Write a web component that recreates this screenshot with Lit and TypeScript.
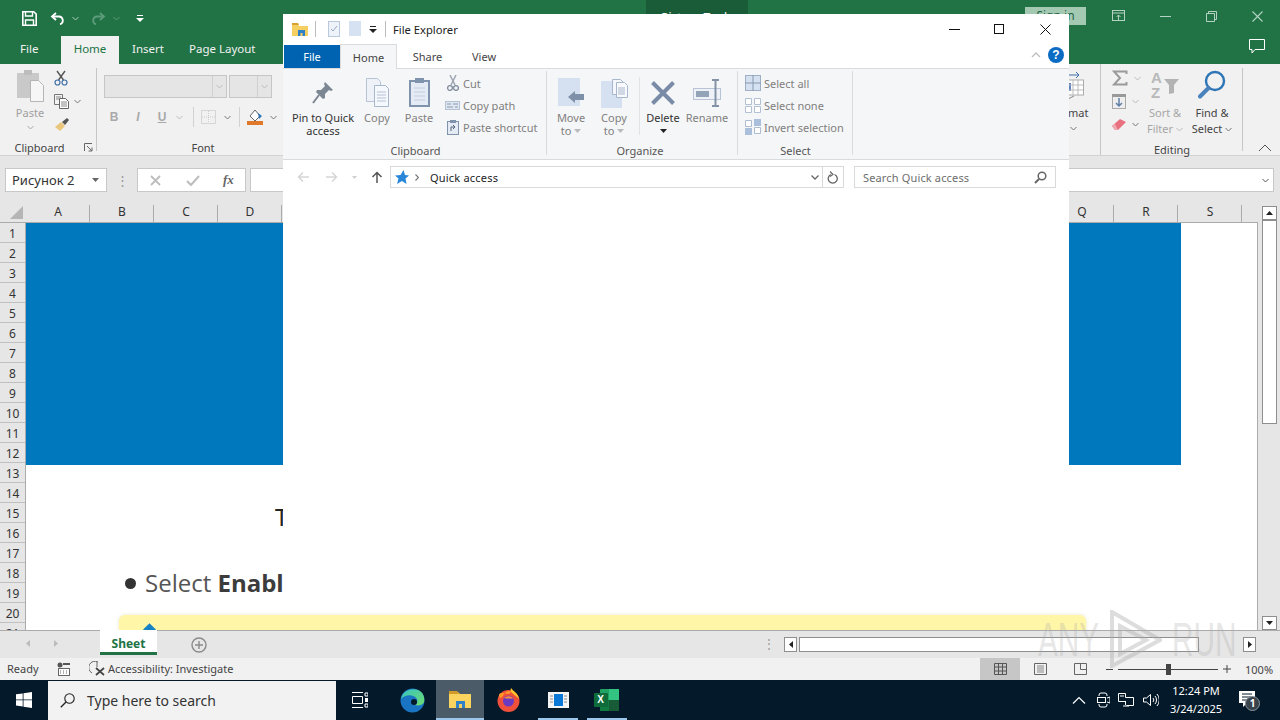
import { LitElement, html, css, svg } from "lit";
import { customElement } from "lit/decorators.js";

const chev = (c = "#777") => html`<svg class="chev" width="7" height="5" viewBox="0 0 7 5"><path d="M.5 1 3.500 4 6.500 1" fill="none" stroke="${c}" stroke-width="1"/></svg>`;
const tri = (c = "#444") => html`<svg width="7" height="4" viewBox="0 0 7 4"><path d="M0 0h7L3.500 4z" fill="${c}"/></svg>`;
const i = (w: number, h: number, body: unknown) => html`<svg width="${w}" height="${h}" viewBox="0 0 ${w} ${h}">${body}</svg>`;

const icons = {
  save: i(15, 15, svg`<path d="M.8.8h11l2.400 2.400v11H.8z" fill="none" stroke="#fff" stroke-width="1.600"/><path d="M3.500 1v4h7V1" fill="none" stroke="#fff" stroke-width="1.400"/><path d="M3.500 14V9h8v5" fill="none" stroke="#fff" stroke-width="1.400"/>`),
  undo: i(15, 13, svg`<path d="M6 1 2 4.500 6 8" fill="none" stroke="#fff" stroke-width="1.800"/><path d="M2.500 4.500H9a4 4 0 0 1 1 7.800" fill="none" stroke="#fff" stroke-width="1.800"/>`),
  redo: i(15, 13, svg`<path d="M9 1 13 4.500 9 8" fill="none" stroke="#5c9c7a" stroke-width="1.800"/><path d="M12.500 4.500H6a4 4 0 0 0-1 7.800" fill="none" stroke="#5c9c7a" stroke-width="1.800"/>`),
  qat: i(8, 8, svg`<path d="M1 1h6v1H1z" fill="#fff"/><path d="M0 4h8L4 8z" fill="#fff"/>`),
  paste: i(29, 34, svg`<rect x="1" y="4" width="22" height="25" fill="#c9c9c9"/><rect x="8" y="1" width="8" height="5" fill="#bdbdbd"/><path d="M14.500 11.500h8l5 5v16h-13z" fill="#f6f6f6" stroke="#b5b5b5"/>`),
  cut: i(14, 16, svg`<path d="M3 1 9.500 10M11 1 4.500 10" stroke="#555" stroke-width="1.400" fill="none"/><circle cx="3.500" cy="12.500" r="2.500" fill="none" stroke="#3f6fa8" stroke-width="1.200"/><circle cx="10.500" cy="12.500" r="2.500" fill="none" stroke="#3f6fa8" stroke-width="1.200"/>`),
  copyX: i(16, 15, svg`<path d="M.5.500h8v10h-8z" fill="#f4f4f4" stroke="#777"/><path d="M5.500 4.500h6l3 3v7h-9z" fill="#fff" stroke="#666"/><path d="M2 3h5M2 5h3M7 8h6M7 10h6M7 12h6" stroke="#888"/>`),
  painter: i(16, 14, svg`<path d="M1 10 7 5l4 4-5 5z" fill="#eac77d"/><path d="M8 5l5-4 2 2-4 5z" fill="#555"/>`),
  fill: i(17, 17, svg`<path d="M8 1 3 7l5 5 5-5z" fill="#fff" stroke="#666"/><path d="M11 4l4 3-3 3z" fill="#2e75b6"/><rect x="0" y="12" width="16" height="4" fill="#e07a2a"/>`),
  borders: i(15, 14, svg`<rect x=".5" y=".5" width="14" height="13" fill="none" stroke="#bbb" stroke-dasharray="1 1"/><path d="M7.500 1v12M1 7h13" stroke="#ccc" stroke-dasharray="1 1"/>`),
  x: i(11, 11, svg`<path d="M1 1 10 10M10 1 1 10" stroke="#bdbdbd" stroke-width="1.800"/>`),
  check: i(14, 11, svg`<path d="M1 6 5 10 13 1" fill="none" stroke="#bdbdbd" stroke-width="2"/>`),
  format: i(16, 28, svg`<path d="M0 4h10M8 1l3 3-3 3" stroke="#3f6fa8" fill="none"/><rect x=".5" y="9" width="15" height="15" fill="#fff" stroke="#aaa"/><rect x="0" y="12" width="3" height="8" fill="#5a80c0"/><path d="M5 9v15M10 9v15M1 14h14M1 19h14" stroke="#bbb"/><path d="M0 28 6 25" stroke="#888"/>`),
  sum: i(16, 16, svg`<path d="M14.500 4V1.500H2L8 8 2 14.500h12.500V12" fill="none" stroke="#9a9a9a" stroke-width="2"/>`),
  down: i(14, 15, svg`<rect x=".5" y=".5" width="13" height="14" fill="#eee" stroke="#aaa"/><rect x="0" y="0" width="14" height="3" fill="#999"/><path d="M7 4v8M4 9l3 3 3-3" fill="none" stroke="#5f7fa8" stroke-width="1.500"/>`),
  eraser: i(14, 12, svg`<path d="M0 8 8 1l6 3-8 8H3z" fill="#e8707f"/><path d="M0 8l3 4h3L3 6z" fill="#f0a8b0"/>`),
  sort: i(30, 28, svg`<text x="1" y="13" font-family="Liberation Sans" font-size="15" font-weight="bold" fill="#b8b8b8">A</text><text x="1" y="28" font-family="Liberation Sans" font-size="15" font-weight="bold" fill="#b8b8b8">Z</text><path d="M14 9h15l-5 6v8l-5 1v-9z" fill="#b3b3b3"/>`),
  find: i(28, 29, svg`<circle cx="17" cy="11" r="9" fill="none" stroke="#2e75b6" stroke-width="2.400"/><path d="M10.500 18 2 26.500" stroke="#4a82bd" stroke-width="4" stroke-linecap="round"/>`),
  folder: i(17, 15, svg`<path d="M0 2h6l1 2h9v10H0z" fill="#f6cf62"/><path d="M0 1h6l1 2H0z" fill="#d8a02e"/><rect x="6" y="8" width="7" height="6" fill="#2f82c8"/><rect x="8.500" y="11" width="2" height="3" fill="#f6cf62"/>`),
  docCheck: i(12, 16, svg`<rect x=".5" y=".5" width="11" height="15" fill="#eef3fa" stroke="#b9c8dc"/><path d="M3 8l2 2 4-5" fill="none" stroke="#97aac4"/>`),
  docBlank: i(13, 16, svg`<rect x="0" y="0" width="12" height="15" fill="#d6e2f2"/>`),
  pin: i(22, 24, svg`<path d="M13 1 21 9l-2 1-2-1-4 4 0 4-2 1-7-7 1-2h4l4-4-1-2z" fill="#7d8794"/><path d="M7 14 1 22" stroke="#7d8794" stroke-width="2"/>`),
  copyL: i(25, 29, svg`<path d="M1.500.500h11l3 3v20h-14z" fill="#eef2f8" stroke="#b8c4d6"/><path d="M9.500 7.500h11l3 3v18h-14z" fill="#f5f8fc" stroke="#a9b7cc"/><path d="M12 14h9M12 17h9M12 20h9M12 23h9" stroke="#b6c2d4"/>`),
  pasteL: i(21, 29, svg`<rect x="1" y="3" width="19" height="25" fill="#e4ebf5" stroke="#7f93ad" stroke-width="2"/><rect x="6" y="0" width="9" height="5" fill="#7f93ad"/><path d="M5 10h11M5 14h11M5 18h11M5 22h11" stroke="#c3cedd"/>`),
  cutS: i(12, 16, svg`<path d="M3 0 8 10M9 0 4 10" stroke="#9aa3af" stroke-width="1.400"/><circle cx="3" cy="13" r="2.400" fill="none" stroke="#7f8c9d" stroke-width="1.300"/><circle cx="9" cy="13" r="2.400" fill="none" stroke="#7f8c9d" stroke-width="1.300"/>`),
  path: i(15, 9, svg`<rect x=".5" y=".5" width="14" height="8" fill="#dfe7f2" stroke="#b5c2d4"/><path d="M2 3h4M8 3h5M2 6h6M10 6h3" stroke="#8a9ab0"/>`),
  shortcut: i(12, 15, svg`<rect x=".5" y="1.500" width="11" height="13" fill="#e4ebf5" stroke="#7f93ad"/><rect x="3" y="0" width="6" height="3" fill="#7f93ad"/><path d="M4 11V7h4M6 5l2 2-2 2" fill="none" stroke="#55657a"/>`),
  move: i(27, 29, svg`<rect x="0" y="0" width="22" height="28" fill="#d5e0f0"/><path d="M10 19l7-6v3h9v6h-9v3z" fill="#7f91a8"/>`),
  copyTo: i(27, 30, svg`<rect x="0" y="3" width="21" height="27" fill="#d5e0f0"/><path d="M11.500 1.500h8l3 3v12h-11z" fill="#f4f7fb" stroke="#a9b7cc"/><path d="M15.500 4.500h8l3 3v12h-11z" fill="#f8fafd" stroke="#a9b7cc"/><path d="M17 10h7M17 12h7M17 14h7M17 16h7" stroke="#a9b7cc"/>`),
  del: i(26, 26, svg`<path d="M2.500 2.500 23.500 23.500M23.500 2.500 2.500 23.500" stroke="#7a8ba8" stroke-width="4"/>`),
  rename: i(29, 28, svg`<rect x=".5" y="9.500" width="27" height="11" fill="#eef2f8" stroke="#b8c4d6"/><rect x="3" y="12" width="13" height="6" fill="#93a3b8"/><path d="M19 1h7M19 27h7M22.500 1v26" stroke="#8492a6" stroke-width="2"/>`),
  selAll: i(16, 16, svg`<rect x=".5" y=".5" width="15" height="15" fill="#d5e0f0" stroke="#9fb0c6"/><path d="M8 0v16M0 8h16" stroke="#8799b0"/>`),
  selNone: i(16, 15, svg`<path d="M.5.500h6v6h-6zM9.500.500h6v6h-6zM.5 8.500h6v6h-6zM9.500 8.500h6v6h-6z" fill="#fff" stroke="#b3c0d2"/>`),
  selInv: i(16, 16, svg`<path d="M.5 1.500h6v6h-6zM9.500 8.500h6v6h-6z" fill="#fff" stroke="#aebcd0"/><path d="M9 0h7v7H9zM0 9h7v7H0z" fill="#a9bfdc"/>`),
  star: i(14, 14, svg`<path d="M8.500 0 10 5l4 .5L10.500 8.500 11.500 14 7 11 2 14 3.500 8.500 0 5.500l5.500-.5z" fill="#2a86d8"/>`),
  search: i(13, 13, svg`<circle cx="8" cy="5" r="3.800" fill="none" stroke="#666" stroke-width="1.500"/><path d="M5 8 1 12" stroke="#666" stroke-width="2"/>`),
  refresh: i(11, 13, svg`<path d="M4 3.500a4.500 4.500 0 1 0 3.500 0" fill="none" stroke="#666" stroke-width="1.300"/><path d="M3 .5 6 3.500 3 5.500" fill="none" stroke="#666" stroke-width="1.100"/>`),
  edge: i(25, 25, svg`<defs><linearGradient id="e1" x1="0" y1="0" x2="1" y2="1"><stop offset="0" stop-color="#36c3c0"/><stop offset="1" stop-color="#6fdc6f"/></linearGradient></defs><circle cx="12.500" cy="12.500" r="12" fill="#1a74c4"/><path d="M1 11C3 2 12 0 18 2c5 2 7 7 6 12-1 3-5 4-9 3 2-1 3-3 2-6-2-4-11-6-16 0z" fill="url(#e1)"/><circle cx="14" cy="14" r="3" fill="#04192a"/>`),
  explorer: i(22, 20, svg`<path d="M0 2h9l2 2h11v14H0z" fill="#fbd35f"/><path d="M0 1h8l2 3H0z" fill="#d29b28"/><rect x="7" y="11" width="9" height="7" fill="#2f82c8"/><rect x="10" y="14" width="3" height="4" fill="#f6cf62"/>`),
  firefox: i(23, 24, svg`<circle cx="11.500" cy="13" r="11" fill="#f0503a"/><path d="M2 8C5 14 6 3 12 3c4 0 9 3 10 9C20 5 14 2 12 6 8 6 2 3 2 8z" fill="#ff9a28"/><path d="M14 0c2 3 7 5 8 11C18 6 12 5 14 0z" fill="#ffc62d"/><circle cx="11.500" cy="13" r="5.500" fill="#6a3bc0"/><path d="M7 10c4-3 8-2 9 1-3-1-6 0-9-1z" fill="#ff8a3c"/>`),
  app: i(21, 16, svg`<rect width="21" height="16" fill="#f4f4f4"/><rect x="6" y="2" width="9" height="12" fill="#0a78d6"/><path d="M2 4h3M2 7h3M2 10h3M16 4h3M16 7h3M16 10h3" stroke="#8a8a8a"/>`),
  excel: i(25, 22, svg`<rect x="6" y="0" width="19" height="22" rx="1" fill="#21a366"/><rect x="15" y="0" width="10" height="11" fill="#33c481"/><rect x="6" y="11" width="9" height="11" fill="#107c41"/><rect x="15" y="11" width="10" height="11" fill="#185c37"/><rect x="0" y="4" width="14" height="14" rx="1" fill="#0e6b3a"/>`),
};

@customElement("app-root")
export class AppRoot extends LitElement {
  static styles = css`
    :host { display: block; width: 1280px; height: 720px; position: relative; overflow: hidden; font-family: "Noto Sans", "Liberation Sans", sans-serif; font-size: 11px; color: #444; background: #fff; }
    svg { display: block; flex: none; }
    .excel { display: grid; grid-template-rows: 36px 28px 92px 44px 430px 28px 22px 40px; height: 720px; }

    .title { background: #217346; display: flex; align-items: center; position: relative; padding-left: 22px; }
    .title > * { flex: none; }
    .undo { margin-left: 13px; }
    .title .chev { margin: 0 12px 0 7px; }
    .pt { position: absolute; left: 646px; top: 0; width: 102px; height: 36px; background: #1a5c38; color: #fff; text-align: center; font-size: 12px; line-height: 35px; }
    .signin { position: absolute; left: 1025px; top: 7px; width: 61px; height: 18px; background: #a3c9b3; color: #1f5f3c; font-size: 12px; line-height: 18px; text-align: center; }
    .wc { position: absolute; top: 6px; width: 46px; height: 20px; display: flex; align-items: center; justify-content: center; }

    .tabs { background: #217346; display: flex; color: #f1f1f1; font-size: 11.500px; position: relative; }
    .tabs span { height: 28px; line-height: 26px; flex: none; box-sizing: border-box; }
    .tabs .file { width: 61px; padding-left: 20px; }
    .tabs .on { background: #f1f1f1; color: #217346; width: 58px; text-align: center; }
    .tabs .ins { width: 70px; padding-left: 13px; }
    .cm { position: absolute; left: 1249px; top: 3px; }

    .ribbon { background: #f1f1f1; display: flex; border-bottom: 1px solid #d2d2d2; position: relative; box-sizing: border-box; }
    .grp { display: grid; grid-template-rows: 1fr 20px; flex: none; box-sizing: border-box; }
    .grp .lbl { text-align: center; line-height: 26px; color: #444; font-size: 11px; }
    .sep-r { position: relative; }
    .sep-r::after { content: ""; position: absolute; right: 0; top: 4px; bottom: 4px; width: 1px; background: #c6c6c6; }
    .clip { width: 97px; }
    .clip-b { display: flex; padding: 5px 0 0 14px; }
    .pastec { width: 32px; display: flex; flex-direction: column; align-items: center; color: #a0a0a0; line-height: 15px; }
    .pastec span { margin: 2px 0 5px; }
    .clipcol { margin-left: 8px; display: flex; flex-direction: column; gap: 7px; padding-top: 1px; }
    .clipcol div { display: flex; align-items: center; gap: 4px; height: 16px; }
    .lblw { position: relative; }
    .launch { position: absolute; right: 4px; top: 8px; }
    .font { width: 200px; }
    .font-b { padding: 11px 0 0 7px; display: flex; flex-direction: column; gap: 9px; }
    .frow { display: flex; gap: 2px; }
    .dd { height: 23px; box-sizing: border-box; background: #e5e5e5; border: 1px solid #c6c6c6; display: flex; justify-content: flex-end; }
    .dd i { width: 13px; border-left: 1px solid #d0d0d0; display: flex; align-items: center; justify-content: center; }
    .biu { display: flex; align-items: center; height: 20px; color: #a9a9a9; font: bold 12px "Liberation Sans", sans-serif; margin-left: -2px; }
    .biu > * { flex: none; }
    .biu b { width: 24px; text-align: center; }
    .vs { width: 1px; height: 20px; background: #d2d2d2; }
    .spacer { flex: 1; }
    .fmt { width: 32px; display: flex; flex-direction: column; align-items: flex-start; color: #444; padding-top: 7px; line-height: 16px; box-sizing: border-box; }
    .fmt span { margin-top: 6px; }
    .fmt .chev { margin: 5px 0 0 2px; }
    .edit { width: 143px; margin-right: 37px; }
    .edit-b { display: flex; padding: 6px 0 0 11px; }
    .ecol { display: flex; flex-direction: column; gap: 7px; width: 29px; }
    .ecol div { display: flex; align-items: center; gap: 6px; height: 16px; }
    .big { display: flex; flex-direction: column; align-items: center; width: 46px; line-height: 16px; flex: none; }
    .big span { margin-top: 7px; }
    .big em { font-style: normal; display: flex; align-items: center; gap: 3px; }
    .big.dim { color: #a6a6a6; width: 48px; }
    .collapse { position: absolute; right: 8px; bottom: 3px; }

    .fbar { background: #e6e6e6; display: flex; align-items: flex-start; padding: 12px 6px 0 5px; box-sizing: border-box; }
    .fbar > div { height: 24px; background: #fff; border: 1px solid #c8c8c8; box-sizing: border-box; flex: none; display: flex; align-items: center; }
    .name { width: 102px; justify-content: space-between; padding: 0 7px 0 6px; font-size: 13px; color: #333; }
    .fbar > .dots { width: 30px; background: none; border: 0; justify-content: center; color: #999; font-size: 13px; }
    .fx { width: 109px; padding-left: 12px; gap: 25px; }
    .fx em { font: italic bold 13px "Liberation Serif", serif; color: #666; margin-left: -2px; }
    .finput { flex: 1 !important; margin-left: 4px; justify-content: flex-end; padding-right: 4px; }

    .main { display: grid; grid-template-columns: 1258px 22px; background: #e6e6e6; min-height: 0; }
    .gridw { display: grid; grid-template-rows: 22px 408px; min-height: 0; }
    .cols { display: flex; background: #e6e6e6; }
    .corner { width: 26px; flex: none; display: flex; align-items: flex-end; justify-content: flex-end; padding: 0 3px 3px 0; box-sizing: border-box; }
    .cols span { width: 64px; flex: none; box-sizing: border-box; text-align: center; line-height: 24px; font-size: 12px; color: #333; position: relative; }
    .cols span::after { content: ""; position: absolute; right: 0; top: 5px; bottom: 0; width: 1px; background: #ababab; }
    .sheet { display: flex; border-top: 1px solid #ababab; min-height: 0; overflow: hidden; }
    .rows { width: 26px; flex: none; background: #e6e6e6; overflow: hidden; border-right: 1px solid #ababab; box-sizing: border-box; }
    .rows span { display: block; height: 20px; box-sizing: border-box; border-bottom: 1px solid #c0c0c0; text-align: center; line-height: 21px; font-size: 12px; color: #333; }
    .canvas { flex: 1; background: #fff; position: relative; overflow: hidden; border-right: 1px solid #ababab; }
    .pic { position: absolute; left: 0; top: 0; width: 1155px; height: 242px; background: #0078bd; }
    .t1 { position: absolute; left: 249px; top: 279px; font-size: 24px; color: #222; line-height: 30px; }
    .bullet { position: absolute; left: 99px; top: 355px; width: 11px; height: 11px; border-radius: 50%; background: #333; }
    .sel { position: absolute; left: 119px; top: 344px; font: 24px "Open Sans", sans-serif; color: #555; line-height: 32px; white-space: nowrap; }
    .sel b { color: #3c3c3c; }
    .note { position: absolute; left: 93px; top: 392px; width: 967px; height: 30px; background: #fff6a8; border-radius: 6px 6px 0 0; box-shadow: 0 0 4px #e9e6c8; }
    .diam { position: absolute; left: 119px; top: 402px; width: 9px; height: 9px; background: #1682c4; transform: rotate(45deg); }
    .vbar { display: flex; flex-direction: column; padding: 6px 3px 0 4px; min-height: 0; }
    .sb { width: 15px; height: 14px; background: #fff; border: 1px solid #8e8e8e; box-sizing: border-box; display: flex; align-items: center; justify-content: center; flex: none; }
    .thumb { height: 204px; width: 15px; background: #fff; border: 1px solid #8e8e8e; box-sizing: border-box; flex: none; }
    .track { flex: 1; }

    .stabs { background: #e6e6e6; display: flex; align-items: flex-start; border-top: 1px solid #ababab; box-sizing: border-box; position: relative; }
    .nav { width: 100px; height: 26px; display: flex; gap: 24px; padding: 9px 0 0 26px; box-sizing: border-box; flex: none; }
    .stab { width: 57px; height: 25px; background: #fff; border-bottom: 3px solid #217346; box-sizing: border-box; color: #217346; font-weight: 700; font-size: 12px; text-align: center; line-height: 27px; flex: none; margin-top: -1px; }
    .plus { margin: 6px 0 0 34px; flex: none; }
    .sdots { margin-left: 551px; color: #999; padding-top: 4px; font-size: 12px; flex: none; width: 22px; text-align: center; }
    .hs { display: flex; margin: 6px 0 0 4px; align-items: center; flex: none; }
    .hs .sb { width: 13px; height: 15px; }
    .hthumb { width: 400px; height: 15px; margin-left: 2px; background: #fff; border: 1px solid #8e8e8e; box-sizing: border-box; }
    .htrack { width: 44px; }

    .status { background: #f1f1f1; display: flex; align-items: center; font-size: 11px; color: #444; position: relative; padding-bottom: 1px; box-sizing: border-box; }
    .status > * { flex: none; }
    .rdy { width: 57px; padding-left: 7px; box-sizing: border-box; }
    .acc { margin: 0 3px 0 18px; }
    .views { position: absolute; left: 980px; top: 0; display: flex; height: 22px; }
    .views div { width: 40px; display: flex; align-items: center; justify-content: center; }
    .views .on { background: #c6c6c6; }
    .zoom { position: absolute; left: 1106px; top: 0; height: 22px; display: flex; align-items: center; gap: 4px; color: #444; }
    .slider { width: 100px; height: 1px; background: #444; position: relative; margin: 0 1px; }
    .slider i { position: absolute; left: 48px; top: -5px; width: 5px; height: 11px; background: #444; }
    .pct { margin-left: 10px; color: #444; }

    .task { background: #04192a; display: flex; align-items: center; color: #fff; position: relative; }
    .task > * { flex: none; }
    .start { width: 48px; display: flex; justify-content: center; }
    .tsearch { width: 288px; height: 39px; margin-top: 1px; background: #f2f2f2; display: flex; align-items: center; gap: 12px; padding-left: 12px; box-sizing: border-box; color: #333; font-size: 14px; }
    .ti { width: 48px; height: 40px; display: flex; align-items: center; justify-content: center; box-sizing: border-box; position: relative; }
    .ti.act { background: #4b5b68; }
    .ti.run::after { content: ""; position: absolute; left: 0; right: 0; bottom: 0; height: 2px; background: #9cc7ec; }
    .ti.app { margin-left: 2px; }
    .ti.app::after { left: 4px; right: 4px; }
    .ti.xl::after { left: 5px; right: 3px; }
    .ti.edge { margin-left: 4px; }
    .xx { position: absolute; left: 0; top: 4px; width: 14px; height: 14px; color: #fff; font: bold 10px/14px "Liberation Sans", sans-serif; text-align: center; }
    .tray { position: absolute; left: 1072px; top: 0; height: 40px; display: flex; align-items: center; }
    .tray > * { flex: none; }
    .clock { width: 66px; text-align: center; font-size: 11px; line-height: 18px; margin-left: 4px; color: #fff; }
    .noti { position: absolute; left: 1239px; top: 11px; }
    .badge { position: absolute; left: 1245px; top: 16px; width: 15px; height: 15px; border-radius: 50%; background: #39434c; color: #fff; border: 1px solid #8a949c; box-sizing: border-box; font-size: 10px; font-weight: 700; line-height: 13px; text-align: center; }

    .win { position: absolute; left: 283px; top: 14px; width: 786px; height: 596px; background: #fff; display: grid; grid-template-rows: 30px 25px 91px 36px 1fr; color: #444; }
    .wt { display: flex; align-items: center; padding-left: 9px; color: #222; font-size: 11.200px; position: relative; }
    .wt > * { flex: none; }
    .bar { width: 1px; height: 16px; background: #bcbcbc; }
    .wbtn { position: absolute; top: 0; width: 46px; height: 30px; display: flex; align-items: center; justify-content: center; }
    .wtabs { display: flex; border-bottom: 1px solid #dadbdc; font-size: 11px; position: relative; box-sizing: border-box; padding-left: 1px; }
    .wtabs > span { flex: none; text-align: center; line-height: 26px; height: 24px; color: #444; }
    .wtabs .file { width: 56px; background: #0063b1; color: #fff; height: 23px; margin-top: 1px; line-height: 24px; }
    .wtabs .on { width: 57px; height: 25px; background: #f5f6f7; border: 1px solid #dadbdc; border-bottom: 0; box-sizing: border-box; line-height: 25px; }
    .wtabs .sh { width: 61px; }
    .wtabs .vw { width: 52px; }
    .wcol { position: absolute; left: 748px; top: 8px; }
    .help { position: absolute; left: 765px; top: 3px; width: 16px; height: 16px; border-radius: 50%; background: #0c6cc4; color: #fff; font: bold 12px/16px "Liberation Sans", sans-serif; text-align: center; }

    .wrib { background: #f5f6f7; border-bottom: 1px solid #dadbdc; display: flex; box-sizing: border-box; padding-left: 1px; }
    .wg { display: grid; grid-template-rows: 1fr 19px; flex: none; box-sizing: border-box; position: relative; color: #808080; }
    .wg::after { content: ""; position: absolute; right: 0; top: 2px; bottom: 4px; width: 1px; background: #dadbdc; }
    .wg .lbl { text-align: center; color: #555; line-height: 22px; }
    .wb { display: flex; padding-top: 5px; }
    .wi { display: flex; flex-direction: column; align-items: center; flex: none; line-height: 13px; text-align: center; }
    .wi .ic { height: 37px; display: flex; align-items: center; justify-content: center; }
    .wi em { font-style: normal; display: flex; align-items: center; gap: 3px; justify-content: center; }
    .dk { color: #333; }
    .wsm { display: flex; flex-direction: column; gap: 6px; padding-top: 1px; flex: none; }
    .wsm div { display: flex; align-items: center; height: 16px; white-space: nowrap; }
    .wsm .si { width: 19px; margin-right: 1px; display: flex; justify-content: center; flex: none; height: auto; }
    .wsm.sl .si { width: 16px; margin-right: 3px; }
    .wg-c { width: 263px; }
    .wg-o { width: 191px; }
    .wg-s { width: 115px; }
    .vsep { width: 1px; height: 58px; background: #e1e3e6; margin: 3px 0 0 6px; flex: none; }

    .addr { display: flex; align-items: center; position: relative; box-sizing: border-box; padding-bottom: 2px; }
    .nv { display: flex; align-items: center; width: 107px; flex: none; padding-left: 14px; box-sizing: border-box; }
    .nv > * { flex: none; }
    .abox { width: 454px; height: 22px; border: 1px solid #d9d9d9; box-sizing: border-box; display: flex; align-items: center; flex: none; padding-left: 4px; color: #222; font-size: 11px; letter-spacing: .2px; }
    .abox > * { flex: none; }
    .abox .gt { width: 21px; padding-left: 6px; box-sizing: border-box; }
    .abox .grow { flex: 1; }
    .abox .dv { width: 1px; height: 20px; background: #d9d9d9; margin: 0 4px 0 3px; }
    .abox .end { width: 5px; }
    .sbox { width: 202px; height: 22px; margin-left: 10px; border: 1px solid #d9d9d9; box-sizing: border-box; display: flex; align-items: center; justify-content: space-between; padding: 0 8px; color: #6d6d6d; flex: none; letter-spacing: .15px; }

    .mark { position: absolute; left: 1038px; top: 606px; width: 200px; height: 66px; display: flex; align-items: center; color: rgba(170,170,170,.3); font: 48px "Liberation Sans", sans-serif; pointer-events: none; }
    .mark > * { flex: none; }
    .mk { transform: scaleX(.62); transform-origin: left center; width: 66px; }
  `;

  render() {
    const colLetters = "ABCDEFGHIJKLMNOPQRS".split("");
    const rowNums = Array.from({ length: 21 }, (_, n) => n + 1);
    const arrow = (d: string, c: string) => i(12, 12, svg`<path d="${d}" fill="none" stroke="${c}" stroke-width="1.500"/>`);
    return html`
      <div class="excel">
        <div class="title">
          <span>${icons.save}</span><span class="undo">${icons.undo}</span>${chev("#a9cdb9")}
          <span>${icons.redo}</span>${chev("#5c9c7a")}
          <span style="margin-left:4px">${icons.qat}</span>
          <div class="pt">Picture Tools</div>
          <div class="signin">Sign in</div>
          <div class="wc" style="left:1095px">${i(13, 12, svg`<rect x=".5" y=".5" width="12" height="10" fill="none" stroke="#b5d3c2"/><path d="M1 3h11M6.500 10V5M4.500 7l2-2 2 2" stroke="#b5d3c2" fill="none"/>`)}</div>
          <div class="wc" style="left:1142px">${i(11, 1, svg`<rect width="11" height="1" fill="#b5d3c2"/>`)}</div>
          <div class="wc" style="left:1188px">${i(11, 11, svg`<path d="M.5 2.500h8v8h-8zM2.500 2V.5h8v8H9" fill="none" stroke="#b5d3c2"/>`)}</div>
          <div class="wc" style="left:1234px">${i(11, 11, svg`<path d="M.5.500 10.500 10.500M10.500.500.5 10.500" stroke="#b5d3c2" stroke-width="1.100"/>`)}</div>
        </div>
        <div class="tabs">
          <span class="file">File</span><span class="on">Home</span><span class="ins">Insert</span><span>Page Layout</span>
          <div class="cm">${i(17, 15, svg`<path d="M.5.500h15v10H6L3 14v-3.500H.5z" fill="none" stroke="#fff"/>`)}</div>
        </div>
        <div class="ribbon">
          <div class="grp clip sep-r">
            <div class="clip-b">
              <div class="pastec">${icons.paste}<span>Paste</span>${chev("#aaa")}</div>
              <div class="clipcol">
                <div>${icons.cut}</div>
                <div>${icons.copyX}${chev()}</div>
                <div>${icons.painter}</div>
              </div>
            </div>
            <div class="lbl lblw" style="padding-right:18px">Clipboard<span class="launch">${i(9, 9, svg`<path d="M.5 8V.5H8M3 3l5 5M8 4.500V8H4.500" fill="none" stroke="#666"/>`)}</span></div>
          </div>
          <div class="grp font">
            <div class="font-b">
              <div class="frow">
                <div class="dd" style="width:123px"><i>${chev("#bbb")}</i></div>
                <div class="dd" style="width:43px"><i>${chev("#bbb")}</i></div>
              </div>
              <div class="biu">
                <b>B</b><b style="font-style:italic">I</b><b style="text-decoration:underline">U</b>
                <span style="margin-left:2px">${chev("#bbb")}</span>
                <span class="vs" style="margin:0 7px 0 10px"></span>${icons.borders}
                <span style="margin:0 8px">${chev()}</span>
                <span class="vs" style="margin-right:7px"></span>${icons.fill}
                <span style="margin-left:6px">${chev()}</span>
              </div>
            </div>
            <div class="lbl" style="padding-left:12px">Font</div>
          </div>
          <div class="spacer"></div>
          <div class="fmt">${icons.format}<span>mat</span>${chev()}</div>
          <div class="grp edit sep-r" style="border-left:1px solid #c6c6c6">
            <div class="edit-b">
              <div class="ecol">
                <div>${icons.sum}${chev("#bbb")}</div>
                <div>${icons.down}${chev("#bbb")}</div>
                <div>${icons.eraser}${chev()}</div>
              </div>
              <div class="big dim">${icons.sort}<span>Sort &amp;</span><em>Filter ${chev("#bbb")}</em></div>
              <div class="big">${icons.find}<span style="margin-top:6px">Find &amp;</span><em>Select ${chev()}</em></div>
            </div>
            <div class="lbl">Editing</div>
          </div>
          <div class="collapse">${i(14, 8, svg`<path d="M1 7 7 1l6 6" fill="none" stroke="#555"/>`)}</div>
        </div>
        <div class="fbar">
          <div class="name"><span>Рисунок 2</span>${tri("#666")}</div>
          <div class="dots">⋮</div>
          <div class="fx">${icons.x}${icons.check}<em>fx</em></div>
          <div class="finput">${chev("#555")}</div>
        </div>
        <div class="main">
          <div class="gridw">
            <div class="cols">
              <div class="corner">${i(13, 13, svg`<path d="M13 0v13H0z" fill="#b5b5b5"/>`)}</div>
              ${colLetters.map((c) => html`<span>${c}</span>`)}
            </div>
            <div class="sheet">
              <div class="rows">${rowNums.map((n) => html`<span>${n}</span>`)}</div>
              <div class="canvas">
                <div class="pic"></div>
                <div class="t1">T</div>
                <div class="bullet"></div>
                <div class="sel">Select <b>Enabl</b></div>
                <div class="note"></div>
                <div class="diam"></div>
              </div>
            </div>
          </div>
          <div class="vbar">
            <div class="sb">${i(7, 4, svg`<path d="M3.500 0 7 4H0z" fill="#222"/>`)}</div>
            <div class="thumb"></div>
            <div class="track"></div>
            <div class="sb">${tri("#222")}</div>
          </div>
        </div>
        <div class="stabs">
          <div class="nav">
            ${i(4, 7, svg`<path d="M4 0v7L0 3.500z" fill="#bbb"/>`)}${i(4, 7, svg`<path d="M0 0v7l4-3.500z" fill="#bbb"/>`)}
          </div>
          <div class="stab">Sheet</div>
          <div class="plus">${i(16, 16, svg`<circle cx="8" cy="8" r="7" fill="none" stroke="#8a8a8a" stroke-width="1.400"/><path d="M8 4v8M4 8h8" stroke="#8a8a8a" stroke-width="1.400"/>`)}</div>
          <div class="sdots">⋮</div>
          <div class="hs">
            <div class="sb">${i(4, 7, svg`<path d="M4 0v7L0 3.500z" fill="#222"/>`)}</div>
            <div class="hthumb"></div>
            <div class="htrack"></div>
            <div class="sb">${i(4, 7, svg`<path d="M0 0v7l4-3.500z" fill="#222"/>`)}</div>
          </div>
        </div>
        <div class="status">
          <span class="rdy">Ready</span>
          ${i(14, 14, svg`<circle cx="3" cy="3" r="2.500" fill="#555"/><path d="M6 1h7v2H6z" fill="#555"/><rect x="1.500" y="6.500" width="11" height="7" fill="#fff" stroke="#666"/><path d="M3 9h1M6 9h1M9 9h1M3 11h1M6 11h1M9 11h1" stroke="#666"/>`)}
          <span class="acc">${i(16, 15, svg`<path d="M9 1A6 6 0 1 0 3 12" fill="none" stroke="#666"/><path d="M8 1v5" stroke="#666"/><path d="M7 7 15 14M15 7 7 14" stroke="#444" stroke-width="1.700"/>`)}</span>
          <span>Accessibility: Investigate</span>
          <div class="views">
            <div class="on">${i(13, 12, svg`<path d="M.5.500h12v11H.5zM4.500.500v11M8.500.500v11M.5 4h12M.5 8h12" fill="none" stroke="#555"/>`)}</div>
            <div>${i(13, 12, svg`<path d="M.5.500h12v11H.5z" fill="none" stroke="#666"/><path d="M3 3h7M3 5h7M3 7h7M3 9h7" stroke="#888"/>`)}</div>
            <div>${i(13, 12, svg`<path d="M.5.500h12v11H.5zM6.500.500v6h6" fill="none" stroke="#666"/>`)}</div>
          </div>
          <div class="zoom">
            ${i(7, 1, svg`<rect width="7" height="1" fill="#444"/>`)}
            <div class="slider"><i></i></div>
            ${i(8, 8, svg`<path d="M4 0v8M0 4h8" stroke="#444"/>`)}
            <span class="pct">100%</span>
          </div>
        </div>
        <div class="task">
          <div class="start">${i(16, 16, svg`<path d="M0 2.300 6.700 1.400v6.100H0zM7.500 1.300 16 0v7.500H7.500zM0 8.300h6.700v6.200L0 13.600zM7.500 8.300H16V16l-8.500-1.200z" fill="#fff"/>`)}</div>
          <div class="tsearch">
            ${i(15, 15, svg`<circle cx="9.500" cy="5.500" r="4.700" fill="none" stroke="#222" stroke-width="1.100"/><path d="M6 9 .8 14.200" stroke="#222" stroke-width="1.300"/>`)}
            <span>Type here to search</span>
          </div>
          <div class="ti">${i(16, 16, svg`<path d="M0 .5h11M0 15.500h11M.5 4.500h10v7H.5z" fill="none" stroke="#fff"/><path d="M13 1h3v3h-3z" fill="none" stroke="#fff"/><rect x="13" y="6" width="3" height="4" fill="#fff"/><path d="M13 12h3v3h-3z" fill="none" stroke="#fff"/>`)}</div>
          <div class="ti edge">${icons.edge}</div>
          <div class="ti act run">${icons.explorer}</div>
          <div class="ti">${icons.firefox}</div>
          <div class="ti run app">${icons.app}</div>
          <div class="ti run xl" style="margin-left:0"><span style="position:relative">${icons.excel}<span class="xx">X</span></span></div>
          <div class="tray">
            <span style="margin-right:11px">${i(14, 8, svg`<path d="M1 7.500 7 1.500 13 7.500" fill="none" stroke="#fff" stroke-width="1.200"/>`)}</span>
            <span style="margin-right:8px">${i(13, 16, svg`<path d="M2 4V3q0-2 2-2h4q2 0 2 2v1M2 12v1q0 2 2 2h4q2 0 2-2v-1" fill="none" stroke="#fff"/><rect x=".5" y="5.500" width="8" height="5" fill="none" stroke="#fff"/><path d="M10 6l3-1v6l-3-1" fill="none" stroke="#fff"/>`)}</span>
            <span style="margin-right:9px">${i(16, 14, svg`<path d="M.5.500h7v4h8v8h-7M.5.500v8h7.500M7.500 9v3M5 13h6M2 3h4" fill="none" stroke="#fff"/>`)}</span>
            <span>${i(16, 14, svg`<path d="M.5 5v4h3L7.500 12.500V1.500L3.500 5zM10 5a3 3 0 0 1 0 4M12 3a6 6 0 0 1 0 8M14 1a9 9 0 0 1 0 12" fill="none" stroke="#fff"/>`)}</span>
            <div class="clock">12:24 PM<br />3/24/2025</div>
          </div>
          <div class="noti">${i(18, 16, svg`<path d="M0 0h16v12H8L4 16v-4H0z" fill="#fff"/><path d="M3 3h10M3 6h10M3 9h6" stroke="#04192a"/>`)}</div>
          <div class="badge">1</div>
        </div>
      </div>

      <div class="win">
        <div class="wt">
          ${icons.folder}<span class="bar" style="margin:0 12px 0 6px"></span>
          ${icons.docCheck}<span style="width:9px"></span>${icons.docBlank}
          <span style="margin:0 8px 0 7px">${i(8, 7, svg`<path d="M1 0h6v1H1z" fill="#222"/><path d="M0 3h8L4 7z" fill="#222"/>`)}</span>
          <span class="bar" style="margin-right:7px"></span>
          <span>File Explorer</span>
          <div class="wbtn" style="left:648px">${i(11, 1, svg`<rect width="11" height="1" fill="#111"/>`)}</div>
          <div class="wbtn" style="left:693px">${i(10, 10, svg`<rect x=".5" y=".5" width="9" height="9" fill="none" stroke="#111"/>`)}</div>
          <div class="wbtn" style="left:739px">${i(11, 11, svg`<path d="M.5.500 10.500 10.500M10.500.500.5 10.500" stroke="#111"/>`)}</div>
        </div>
        <div class="wtabs">
          <span class="file">File</span><span class="on">Home</span><span class="sh">Share</span><span class="vw">View</span>
          <div class="wcol">${i(10, 6, svg`<path d="M1 5 5 1l4 4" fill="none" stroke="#c0c0c0" stroke-width="1.400"/>`)}</div>
          <div class="help">?</div>
        </div>
        <div class="wrib">
          <div class="wg wg-c">
            <div class="wb">
              <div class="wi dk" style="width:78px"><div class="ic">${icons.pin}</div><span>Pin to Quick<br />access</span></div>
              <div class="wi" style="width:32px;margin-left:-1px"><div class="ic">${icons.copyL}</div><span>Copy</span></div>
              <div class="wi" style="width:32px;margin-left:10px"><div class="ic">${icons.pasteL}</div><span>Paste</span></div>
              <div class="wsm" style="margin-left:8px">
                <div><span class="si">${icons.cutS}</span>Cut</div>
                <div><span class="si">${icons.path}</span>Copy path</div>
                <div><span class="si">${icons.shortcut}</span>Paste shortcut</div>
              </div>
            </div>
            <div class="lbl">Clipboard</div>
          </div>
          <div class="wg wg-o">
            <div class="wb">
              <div class="wi" style="width:48px"><div class="ic">${icons.move}</div><span>Move</span><em>to ${tri("#bbb")}</em></div>
              <div class="wi" style="width:38px"><div class="ic">${icons.copyTo}</div><span>Copy</span><em>to ${tri("#bbb")}</em></div>
              <div class="vsep"></div>
              <div class="wi dk" style="width:46px"><div class="ic">${icons.del}</div><span>Delete</span><em style="height:13px">${tri("#222")}</em></div>
              <div class="wi" style="width:42px"><div class="ic">${icons.rename}</div><span>Rename</span></div>
            </div>
            <div class="lbl" style="padding-right:5px">Organize</div>
          </div>
          <div class="wg wg-s">
            <div class="wb">
              <div class="wsm sl" style="margin-left:7px">
                <div><span class="si">${icons.selAll}</span>Select all</div>
                <div><span class="si">${icons.selNone}</span>Select none</div>
                <div><span class="si">${icons.selInv}</span>Invert selection</div>
              </div>
            </div>
            <div class="lbl">Select</div>
          </div>
        </div>
        <div class="addr">
          <div class="nv">
            ${arrow("M6 1.500 1.500 6 6 10.500M1.500 6H12", "#d6d6d6")}
            <span style="margin-left:17px">${arrow("M6 1.500 10.500 6 6 10.500M10.500 6H0", "#d6d6d6")}</span>
            <span style="margin:0 14px 0 14px">${i(5, 3, svg`<path d="M0 0h5L2.500 3z" fill="#d0d0d0"/>`)}</span>
            ${arrow("M1.500 6 6 1.500 10.500 6M6 1.500V12", "#555")}
          </div>
          <div class="abox">
            ${icons.star}
            <span class="gt">${i(4, 7, svg`<path d="M.5.500 3.500 3.500.5 6.500" fill="none" stroke="#777" stroke-width="1.200"/>`)}</span>
            <span>Quick access</span>
            <span class="grow"></span>
            ${i(8, 5, svg`<path d="M.5.500 4 4 7.500.5" fill="none" stroke="#666" stroke-width="1.300"/>`)}
            <span class="dv"></span>
            ${icons.refresh}
            <span class="end"></span>
          </div>
          <div class="sbox"><span>Search Quick access</span>${icons.search}</div>
        </div>
        <div></div>
      </div>
      <div class="mark">
        <span class="mk">ANY</span>
        <span style="margin:0 0 0 6px">${i(52, 58, svg`<path d="M2 2 50 30 2 56zM10 16 36 30 10 44z" fill="none" stroke="rgba(170,170,170,.4)" stroke-width="4"/>`)}</span>
        <span class="mk" style="margin-left:10px">RUN</span>
      </div>
    `;
  }
}
